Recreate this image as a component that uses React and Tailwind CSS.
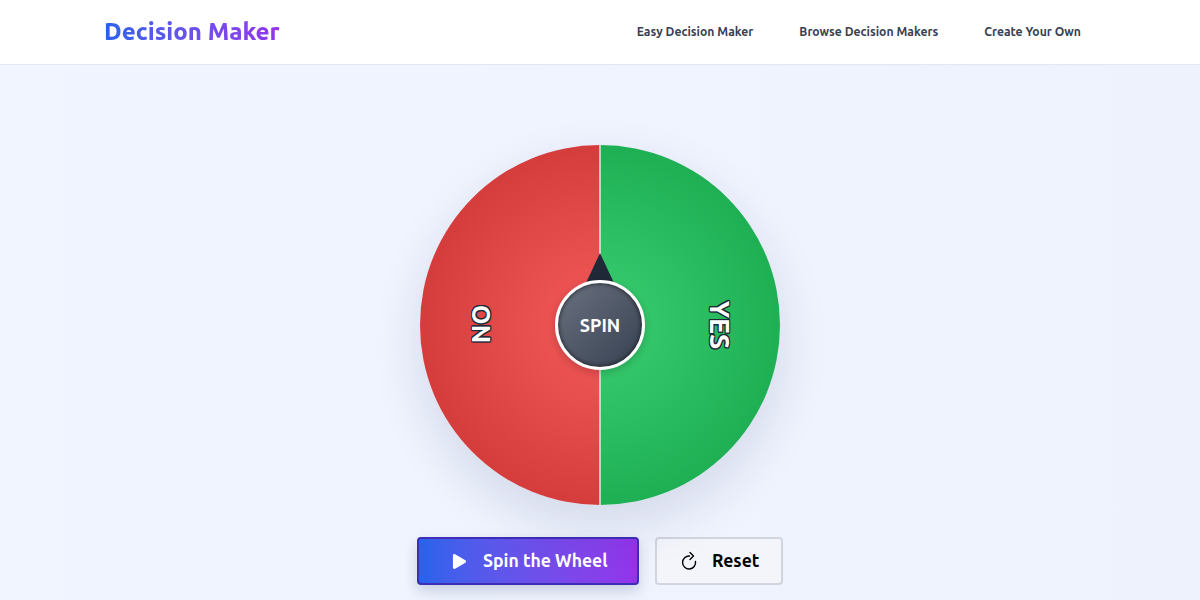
import React from "react";
import { FaPlay } from "react-icons/fa";

export default function App() {
  return (
    <div className="h-[600px] overflow-hidden bg-gradient-to-r from-[#f0f5ff] to-[#eef2fd] font-['Ubuntu','Noto_Sans',sans-serif]">
      <header className="h-[65px] bg-white border-b border-[#e3e7f0]">
        <div className="mx-auto max-w-5xl h-full px-4 flex items-center justify-between">
          <div className="text-2xl font-extrabold bg-gradient-to-r from-[#2563eb] to-[#9333ea] bg-clip-text text-transparent">Decision Maker</div>
          <nav className="flex items-center gap-[14px] -mr-px text-[#374151] text-[12.2px] font-bold">
            <a className="px-4">Easy Decision Maker</a>
            <a className="px-4">Browse Decision Makers</a>
            <a className="px-4">Create Your Own</a>
          </nav>
        </div>
      </header>
      <main className="flex flex-col items-center pt-20">
        <div className="relative w-[360px] h-[360px] rounded-full shadow-[0_20px_50px_rgba(30,41,90,0.13)] bg-[conic-gradient(#22c55e_0deg_180deg,#ef4444_180deg_360deg)]">
          <div className="absolute inset-0 rounded-full bg-[radial-gradient(circle_closest-side,rgba(200,200,200,0.1)_0%,rgba(200,200,200,0.1)_30%,rgba(0,0,0,0.11)_100%)]" />
          <div className="absolute left-[179px] top-0 h-full w-[2px] bg-white/60" />
          <div className="absolute left-[270px] top-[164px] w-[60px] text-center rotate-90 text-white text-[27px] leading-8 font-bold [text-shadow:-1.2px_-1.2px_0_#1f2937,1.2px_-1.2px_0_#1f2937,-1.2px_1.2px_0_#1f2937,1.2px_1.2px_0_#1f2937,0_1.3px_0_#1f2937,0_-1.3px_0_#1f2937,1.3px_0_0_#1f2937,-1.3px_0_0_#1f2937]">YES</div>
          <div className="absolute left-[31px] top-[163px] w-[60px] text-center -rotate-90 text-white text-[25px] leading-8 font-bold [text-shadow:-1.2px_-1.2px_0_#1f2937,1.2px_-1.2px_0_#1f2937,-1.2px_1.2px_0_#1f2937,1.2px_1.2px_0_#1f2937,0_1.3px_0_#1f2937,0_-1.3px_0_#1f2937,1.3px_0_0_#1f2937,-1.3px_0_0_#1f2937]">NO</div>
          <div className="absolute left-[166px] top-[108px] w-0 h-0 border-l-[14px] border-r-[14px] border-b-[30px] border-l-transparent border-r-transparent border-b-[#1f2937]" />
          <div className="absolute left-[135px] top-[135px] w-[90px] h-[90px] rounded-full border-[3px] border-white bg-gradient-to-br from-[#6b7280] to-[#374151] shadow-[0_3px_8px_rgba(0,0,0,0.18),inset_0_0_5px_rgba(0,0,0,0.7)] flex items-center justify-center text-white font-bold text-lg">SPIN</div>
        </div>
        <div className="mt-8 flex gap-4">
          <button className="w-[222px] h-[48px] pl-[33px] rounded border-2 border-[#3f2db5] bg-gradient-to-r from-[#2563eb] to-[#9333ea] text-white font-bold text-[17.6px] flex items-center justify-start gap-[16px] shadow-[0_6px_14px_rgba(30,41,90,0.18)]">
            <FaPlay size={15} />
            Spin the Wheel
          </button>
          <button className="w-[128px] h-[48px] pl-[23px] rounded border-2 border-[#d1d5e0] bg-[#f3f5fb] text-black font-bold text-[17.6px] flex items-center justify-start gap-[14px]">
            <svg width="18" height="20" viewBox="0 0 18 20" fill="none" stroke="currentColor" strokeWidth="1.4" strokeLinecap="round" strokeLinejoin="round">
              <path d="M9.5 5A6.5 6.5 0 1 0 15.5 10.5" />
              <path d="M10 1.5L13.5 5L10 8.5" />
            </svg>
            Reset
          </button>
        </div>
      </main>
    </div>
  );
}
